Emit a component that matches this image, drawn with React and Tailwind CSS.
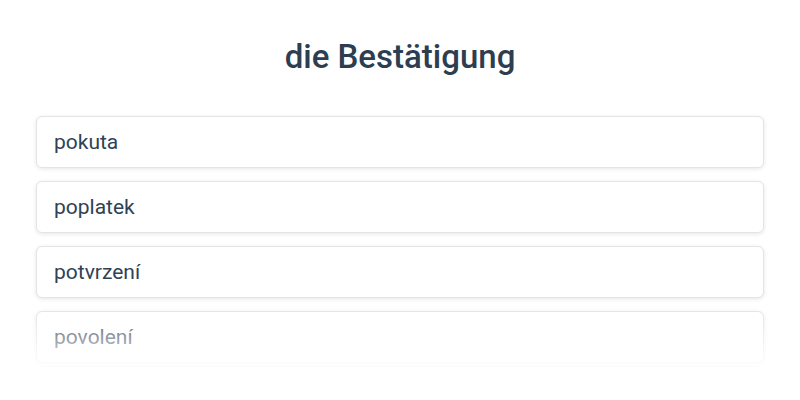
import React from 'react';

const options = ['pokuta', 'poplatek', 'potvrzení', 'povolení'];

export default function App() {
  return (
    <div className="w-[800px] h-[400px] bg-white overflow-hidden font-['Roboto',sans-serif]">
      <div className="pt-[38px] px-9">
        <h1 className="text-center text-[33px] leading-[38px] font-medium text-[#2c3e50]">
          die Bestätigung
        </h1>

        <div className="relative mt-[40px]">
          <div className="flex flex-col gap-[13px]">
            {options.map((opt) => (
              <div
                key={opt}
                className="bg-white border border-[#e2e4e8] rounded-md shadow-[0_1px_4px_rgba(0,0,0,0.1)] px-[17px] py-[13px] text-[21px] leading-6 text-[#2f4256]"
              >
                {opt}
              </div>
            ))}
          </div>
          {/* fade out the bottom of the list */}
          <div className="absolute left-[-8px] right-[-8px] top-[190px] h-[60px] bg-gradient-to-b from-white/0 to-white/90 pointer-events-none" />
        </div>
      </div>
    </div>
  );
}
